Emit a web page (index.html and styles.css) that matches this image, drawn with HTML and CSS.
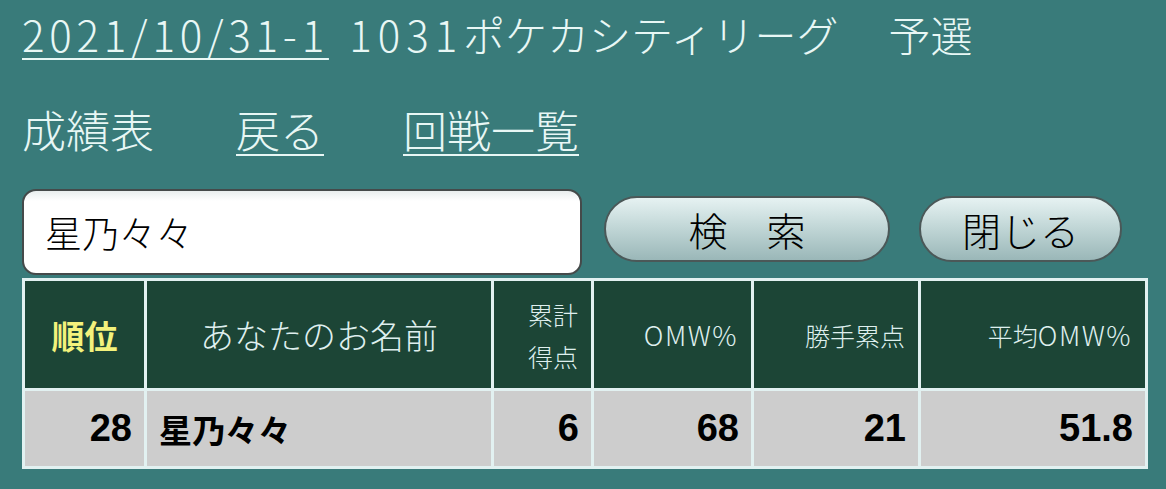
FILE: index.html
```html
<!DOCTYPE html>
<html lang="ja">
<head>
<meta charset="utf-8">
<title>成績表</title>
<link rel="stylesheet" href="styles.css">
</head>
<body>
<div class="page">
  <h1 class="title"><a class="date" href="#">2021/10/31-1</a> <span class="num">1031</span>ポケカシティリーグ　<span class="stage">予選</span></h1>
  <nav class="nav">
    <span class="nav-label">成績表</span>
    <a class="nav-link" href="#">戻る</a>
    <a class="nav-link" href="#">回戦一覧</a>
  </nav>
  <div class="search">
    <div class="input">星乃々々</div>
    <button class="btn btn-search" type="button">検　索</button>
    <button class="btn btn-close" type="button">閉じる</button>
  </div>
  <table class="results">
    <colgroup>
      <col class="c1"><col class="c2"><col class="c3"><col class="c4"><col class="c5"><col class="c6">
    </colgroup>
    <thead>
      <tr>
        <th class="h-rank">順位</th>
        <th class="h-name">あなたのお名前</th>
        <th class="h-small">累計<br>得点</th>
        <th class="h-small"><span class="latin">OMW%</span></th>
        <th class="h-small">勝手累点</th>
        <th class="h-small">平均<span class="latin">OMW%</span></th>
      </tr>
    </thead>
    <tbody>
      <tr>
        <td class="d-num">28</td>
        <td class="d-name">星乃々々</td>
        <td class="d-num">6</td>
        <td class="d-num">68</td>
        <td class="d-num">21</td>
        <td class="d-num">51.8</td>
      </tr>
    </tbody>
  </table>
</div>
</body>
</html>
```
FILE: styles.css
```css
html, body {
  margin: 0;
  padding: 0;
}
body {
  background: #397b7a;
  color: #e8f7f5;
  font-family: "Noto Sans CJK JP", "Noto Sans", sans-serif;
  font-weight: 300;
}
.page {
  padding: 4px 0 0 22px;
}
.title {
  margin: 0;
  font-size: 42px;
  line-height: 60px;
  font-weight: 300;
  white-space: nowrap;
}
.title a, .nav a {
  color: #e8f7f5;
  text-decoration: underline;
  text-decoration-thickness: 2px;
  text-underline-offset: 6px;
}
.date {
  letter-spacing: 4.8px;
}
.num {
  letter-spacing: 6px;
  margin-left: 11px;
}
.stage {
  margin-left: 8px;
}
.nav {
  margin-top: 35px;
  display: flex;
  font-size: 44px;
  line-height: 60px;
  white-space: nowrap;
}
.nav-label {
  margin-right: 82px;
}
.nav-link + .nav-link {
  margin-left: 79px;
}
.search {
  margin-top: 30px;
  display: flex;
  align-items: flex-start;
}
.input {
  box-sizing: border-box;
  width: 560px;
  height: 86px;
  border: 2px solid #454a4a;
  border-radius: 14px;
  background: linear-gradient(#e9eeee 0, #ffffff 10px, #ffffff 100%);
  color: #000;
  font-size: 37px;
  font-weight: 300;
  line-height: 82px;
  padding-left: 21px;
}
.btn {
  box-sizing: border-box;
  height: 66px;
  margin-top: 7px;
  border: 2px solid #4b5858;
  border-radius: 33px;
  background: linear-gradient(#e6f2f2 0%, #c3d8d8 45%, #9ab7b8 100%);
  color: #000;
  font-family: "Noto Sans CJK JP", sans-serif;
  font-size: 39px;
  font-weight: 300;
  line-height: 60px;
  padding: 0;
}
.btn-search {
  width: 286px;
  margin-left: 22px;
}
.btn-close {
  width: 203px;
  margin-left: 29px;
}
.results {
  margin-top: 3px;
  width: 1126px;
  border-spacing: 3px;
  background: #e2f1f1;
  table-layout: fixed;
}
.c1 { width: 119px; }
.c2 { width: 344px; }
.c3 { width: 97px; }
.c4 { width: 157px; }
.c5 { width: 164px; }
.c6 { width: 224px; }
.results th {
  background: #1c4536;
  height: 107px;
  padding: 0 13px 0 0;
  color: #dfefee;
  font-weight: 300;
  text-align: right;
  vertical-align: middle;
}
.h-rank {
  color: #f3f27c !important;
  font-weight: 700 !important;
  font-size: 33px;
  text-align: center !important;
  padding: 0 !important;
}
.h-name {
  font-size: 34px;
  text-align: center !important;
  padding: 0 !important;
}
.h-small {
  font-size: 25px;
  line-height: 42px;
}
.latin {
  font-size: 27px;
  letter-spacing: 1.5px;
}
.results td {
  background: #cdcdcd;
  height: 75px;
  color: #000;
  padding: 0 12px;
  vertical-align: middle;
}
.d-num {
  text-align: right;
  font-family: "Liberation Sans", Arial, sans-serif;
  font-weight: 700;
  font-size: 38px;
}
.d-name {
  text-align: left;
  font-weight: 700;
  font-size: 33px;
}
```
